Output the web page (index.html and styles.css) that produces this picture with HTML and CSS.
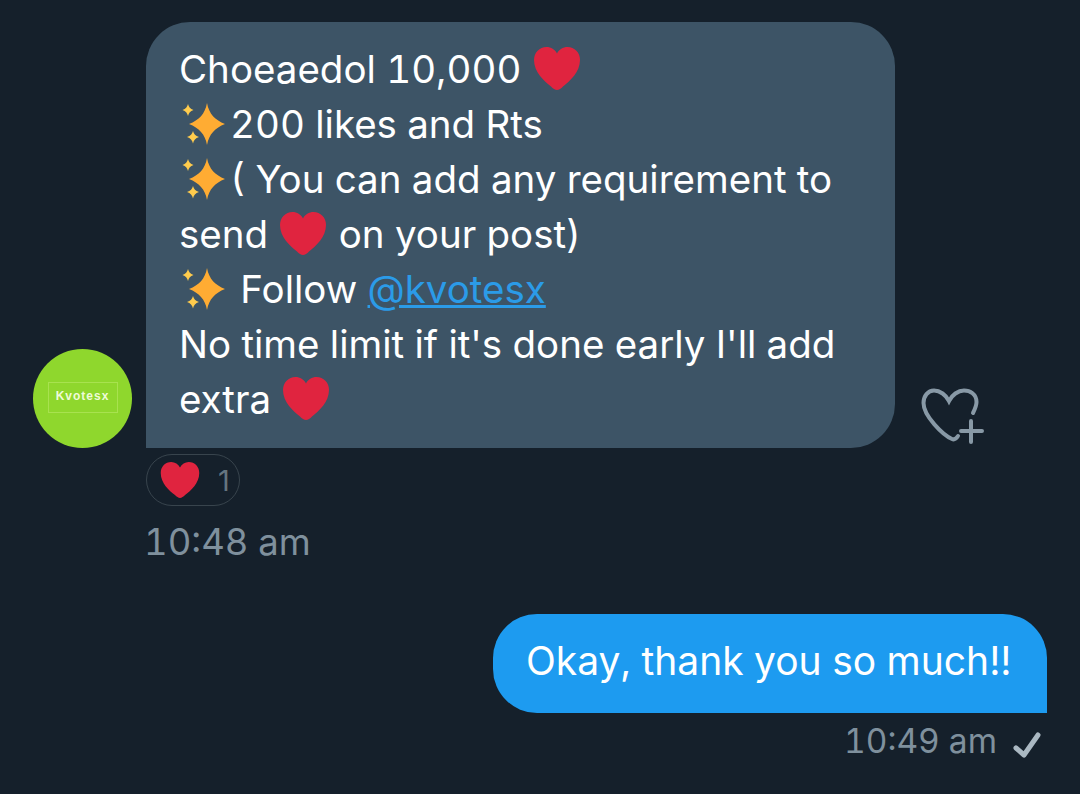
FILE: index.html
```html
<!DOCTYPE html>
<html lang="en">
<head>
  <meta charset="UTF-8">
  <title>Messages</title>
  <link rel="stylesheet" href="styles.css">
</head>
<body>
  <svg class="defs" width="0" height="0">
    <symbol id="heart" viewBox="0 0 46 43">
      <path d="M23 43c-2 0-4-1.500-6-3.500C10 34 0 25 0 13 0 5.500 5.500 0 12.500 0 17 0 21 2.500 23 6.500 25 2.500 29 0 33.500 0 40.500 0 46 5.500 46 13c0 12-10 21-17 26.500-2 2-4 3.500-6 3.500z"/>
    </symbol>
    <symbol id="sparkles" viewBox="0 0 46 42">
      <path fill="#ffac33" d="M25 0C27 11 33 17 43 21 33 25 27 31 25 42 23 31 17 25 7 21 17 17 23 11 25 0z"/>
      <path fill="#ffcc4d" d="M6 1c.8 3 2.200 5 5.500 6C8.200 8 6.800 10 6 13 5.200 10 3.800 8 .5 7 3.800 6 5.200 4 6 1zM11 28c.8 3 2.400 4.800 6 6-3.600 1.200-5.200 3-6 6.500-.8-3.500-2.400-5.300-6-6.500 3.600-1.200 5.200-3 6-6z"/>
    </symbol>
  </svg>

  <div class="thread">
    <div class="incoming">
      <div class="avatar"><span class="avatar-logo">Kvotesx</span></div>
      <div class="bubble bubble-in">
        <div>Choeaedol 10,000 <svg class="emoji heart"><use href="#heart"/></svg></div>
        <div><svg class="emoji spark"><use href="#sparkles"/></svg>200 likes and Rts</div>
        <div><svg class="emoji spark"><use href="#sparkles"/></svg>( You can add any requirement to</div>
        <div>send <svg class="emoji heart"><use href="#heart"/></svg> on your post)</div>
        <div><svg class="emoji spark"><use href="#sparkles"/></svg> Follow <a class="mention" href="#">@kvotesx</a></div>
        <div>No time limit if it's done early I'll add</div>
        <div>extra <svg class="emoji heart"><use href="#heart"/></svg></div>
      </div>
      <svg class="react-add" width="66" height="56" viewBox="0 0 66 56" fill="none" stroke="#8899a6" stroke-width="4" stroke-linecap="round">
        <path d="M52 25c2-4 3.500-7 3.500-11 0-8-6.500-11.500-12.500-11.500S31 7 28 13C25 7 19 2.500 13 2.500S2.500 8 2.500 15C2.500 28 22 47 31 51c2 1 4 0 6-3"/>
        <path d="M50 33v21M40 43h21"/>
      </svg>
    </div>

    <div class="reactions">
      <div class="reaction-pill">
        <svg class="pill-heart"><use href="#heart"/></svg>
        <span class="pill-count">1</span>
      </div>
    </div>
    <div class="time time-in">10:48 am</div>

    <div class="outgoing">
      <div class="bubble bubble-out">Okay, thank you so much!!</div>
    </div>
    <div class="time-out">
      <span class="time time-sent">10:49 am</span>
      <svg class="check" width="30" height="28" viewBox="0 0 30 28" fill="none" stroke="#aab8c2" stroke-width="5" stroke-linecap="round" stroke-linejoin="round">
        <path d="M3 16l8 7L25 3"/>
      </svg>
    </div>
  </div>
</body>
</html>
```

FILE: styles.css
```css
html, body {
  margin: 0;
  padding: 0;
  height: 794px;
  overflow: hidden;
}

body {
  background-color: #15202b;
  font-family: Inter, 'Noto Sans', sans-serif;
  font-variant-numeric: tabular-nums;
  color: #fff;
}

.defs {
  display: block;
}

.thread {
  padding: 22px 33px 0 33px;
}

.incoming {
  display: flex;
  align-items: flex-end;
}

.avatar {
  width: 99px;
  height: 99px;
  border-radius: 50%;
  background-color: #8fd72d;
  flex-shrink: 0;
  display: flex;
  justify-content: center;
  align-items: center;
  margin-right: 14px;
}

.avatar-logo {
  width: 70px;
  height: 31px;
  border: 1px solid #a8e24f;
  box-sizing: border-box;
  font-family: 'Liberation Sans', sans-serif;
  font-size: 12px;
  font-weight: bold;
  letter-spacing: 1px;
  line-height: 27px;
  text-align: center;
  color: #eefbd8;
  margin-bottom: 2px;
}

.bubble {
  font-size: 38.5px;
  line-height: 55px;
  box-sizing: border-box;
}

.bubble-in {
  width: 749px;
  height: 426px;
  padding: 20px 33px 0;
  background-color: #3d5466;
  border-radius: 44px 44px 44px 0;
  white-space: nowrap;
}

.emoji {
  vertical-align: middle;
}

.heart {
  width: 46px;
  height: 43px;
  fill: #e0243f;
  margin: -8px 2px 0 2px;
}

.spark {
  width: 46px;
  height: 42px;
  margin: -6px 2px 0 3px;
}

.mention {
  color: #2b9be8;
}

.react-add {
  margin: 0 0 4px 26px;
}

.reactions {
  padding: 6px 0 0 113px;
}

.reaction-pill {
  width: 94px;
  height: 52px;
  box-sizing: border-box;
  border: 1px solid #38444d;
  border-radius: 26px;
  display: flex;
  align-items: center;
  padding-left: 13px;
}

.pill-heart {
  width: 40px;
  height: 36px;
  fill: #e0243f;
}

.pill-count {
  font-size: 29px;
  font-variant-numeric: normal;
  color: #66757f;
  margin-left: 18px;
}

.time {
  font-size: 36.5px;
  line-height: 42px;
  color: #7f909d;
}

.time-in {
  padding: 15px 0 0 111px;
}

.time-sent {
  font-size: 33.5px;
}

.outgoing {
  display: flex;
  justify-content: flex-end;
  margin-top: 51px;
}

.bubble-out {
  width: 554px;
  height: 99px;
  font-size: 39px;
  background-color: #1d9bf0;
  border-radius: 44px 44px 0 44px;
  padding: 0 33px;
  line-height: 94px;
  white-space: nowrap;
}

.time-out {
  display: flex;
  justify-content: flex-end;
  align-items: center;
  margin-top: 7px;
}

.check {
  margin: 10px 4px 0 16px;
}
```
